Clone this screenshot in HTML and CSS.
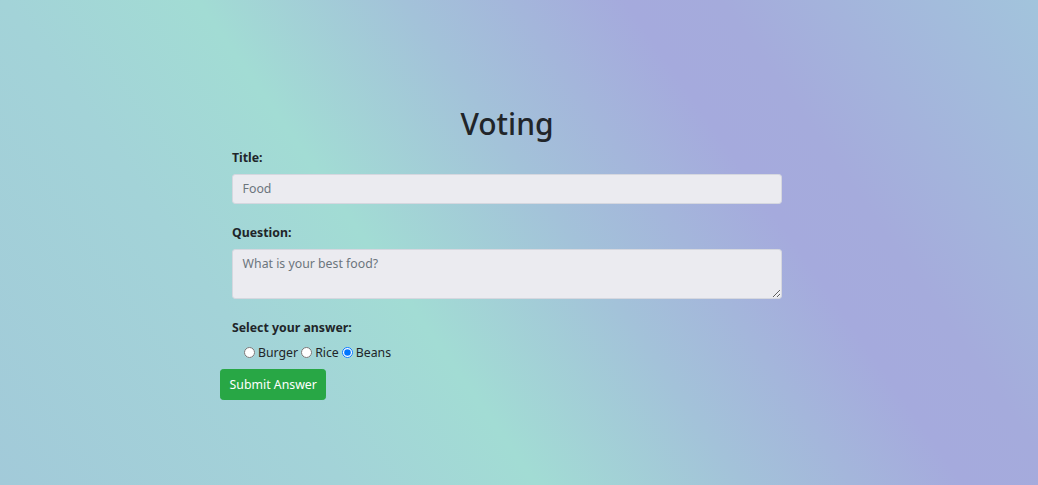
FILE: index.html
```html
<!DOCTYPE html>
<html lang="en">
<head>
<meta charset="utf-8">
<title>Voting</title>
<link rel="stylesheet" href="styles.css">
</head>
<body>
<main class="wrap">
  <h1 class="heading">Voting</h1>
  <form class="form">
    <div class="fields">
      <div class="group">
        <label class="label" for="title">Title:</label>
        <input class="control" id="title" type="text" placeholder="Food">
      </div>
      <div class="group">
        <label class="label" for="question">Question:</label>
        <textarea class="control area" id="question" placeholder="What is your best food?"></textarea>
      </div>
      <div class="answers">
        <span class="label">Select your answer:</span>
        <div class="options">
          <input class="radio" type="radio" name="ans" id="a1"><label class="opt" for="a1">Burger</label>
          <input class="radio" type="radio" name="ans" id="a2"><label class="opt" for="a2">Rice</label>
          <input class="radio" type="radio" name="ans" id="a3" checked><label class="opt" for="a3">Beans</label>
        </div>
      </div>
    </div>
    <button class="btn" type="button">Submit Answer</button>
  </form>
</main>
</body>
</html>
```
FILE: styles.css
```css
html, body {
  margin: 0;
  padding: 0;
}
body {
  min-height: 100vh;
  font-family: "Noto Sans", "Open Sans", "Liberation Sans", sans-serif;
  font-size: 12.3px;
  line-height: 19.2px;
  color: #212529;
  background: linear-gradient(55deg,
    #a2cad9 0%,
    #a3d3d8 25%,
    #a2dcd4 39%,
    #a3c2d9 54%,
    #a5aadd 70%,
    #a5abdc 77%,
    #a2c4dc 100%);
}
.wrap {
  width: 574px;
  margin-left: 220px;
  padding-top: 105px;
}
.heading {
  margin: 0 0 5px;
  text-align: center;
  font-size: 30px;
  font-weight: 500;
  line-height: 38px;
}
.fields {
  padding: 0 12px;
}
.group {
  margin-bottom: 19px;
}
.label {
  display: block;
  font-weight: 700;
  margin-bottom: 6.4px;
}
.control {
  display: block;
  box-sizing: border-box;
  width: 100%;
  height: 30.4px;
  padding: 4.8px 9.6px;
  font-family: inherit;
  font-size: 12.3px;
  line-height: 19.2px;
  color: #495057;
  background: #ebebf0;
  border: 1px solid #d5d7df;
  border-radius: 3.2px;
  margin: 0;
}
.control::placeholder {
  color: #6c757d;
}
.area {
  height: 50px;
  resize: vertical;
}
.options {
  display: flex;
  align-items: center;
  padding-left: 9px;
  height: 19.2px;
  margin-top: 1px;
}
.radio {
  width: 11px;
  height: 11px;
  margin: 0 3px 0 3px;
}
.opt {
  line-height: 19.2px;
}
.btn {
  margin-top: 7px;
  display: block;
  height: 30.4px;
  padding: 0 8.6px;
  font-family: inherit;
  font-size: 12.3px;
  line-height: 19.2px;
  color: #fff;
  background: #28a745;
  border: 1px solid #28a745;
  border-radius: 3.2px;
}
```
